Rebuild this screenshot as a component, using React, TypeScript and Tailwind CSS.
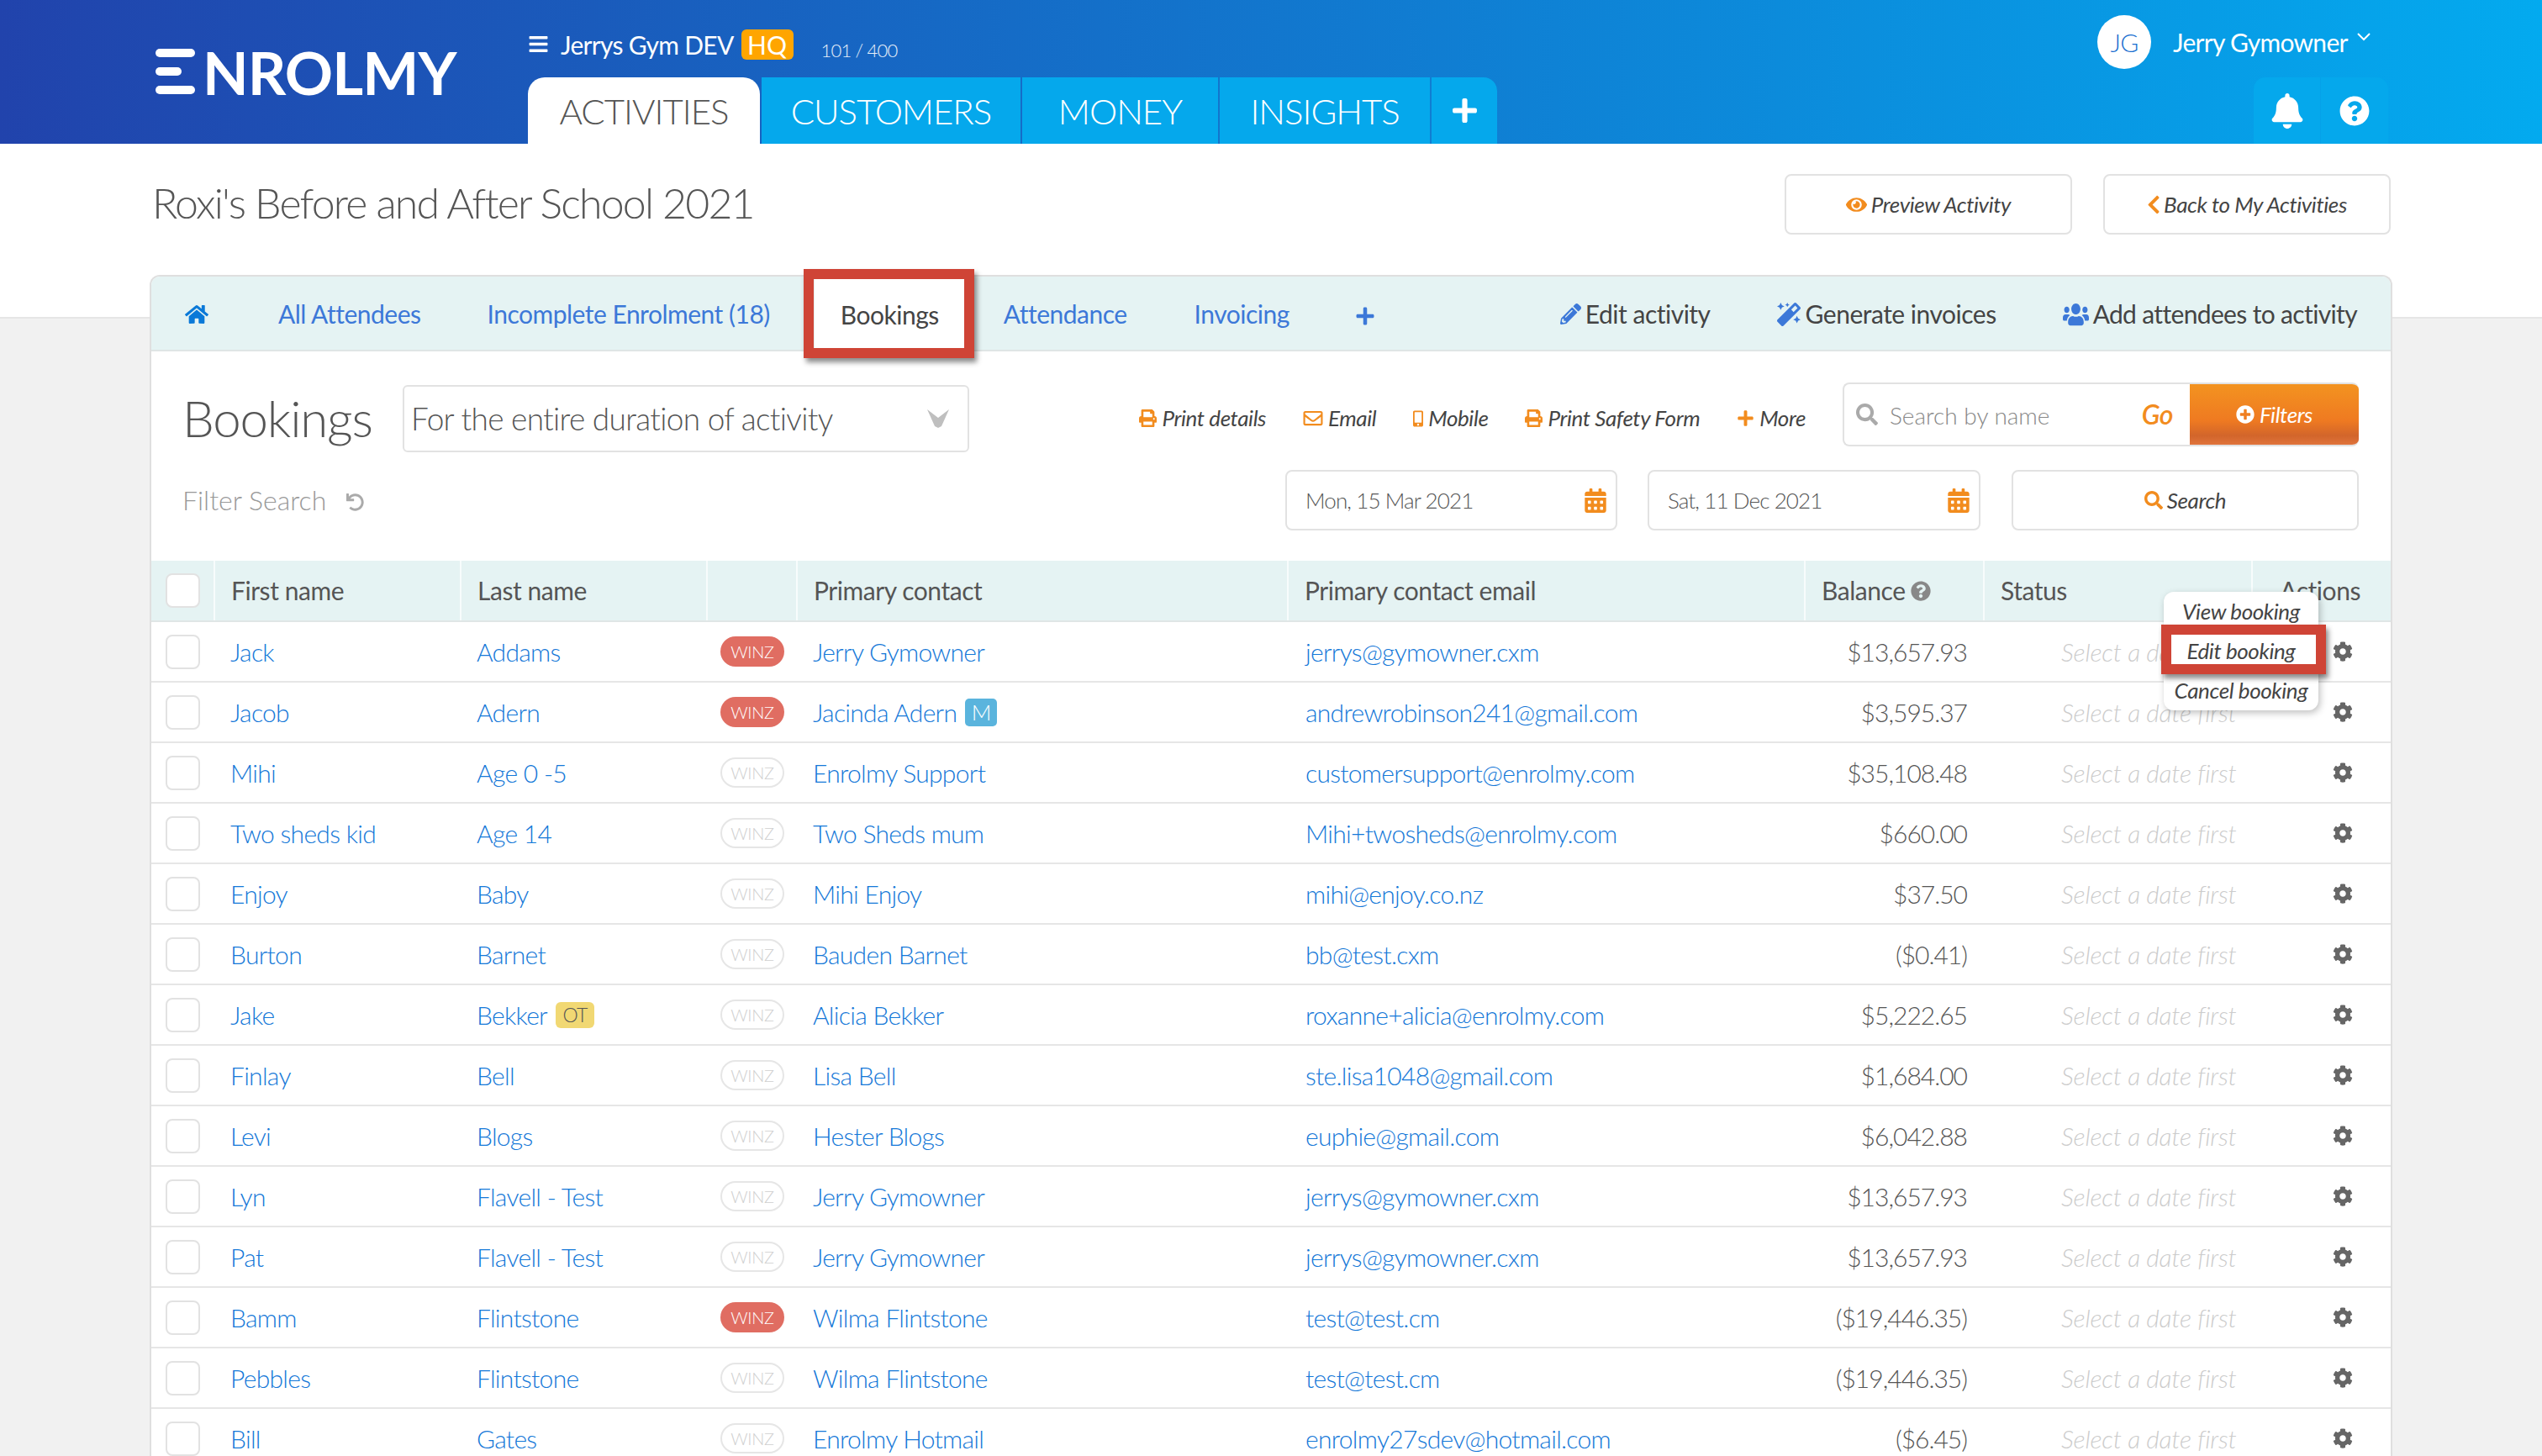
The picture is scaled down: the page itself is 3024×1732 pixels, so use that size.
import React from "react";
import {
  FaBars, FaBell, FaQuestionCircle, FaEye, FaChevronLeft, FaHome, FaPlus, FaPencilAlt, FaMagic, FaUsers,
  FaPrint, FaRegEnvelope, FaMobileAlt, FaSearch, FaPlusCircle, FaCalendarAlt, FaCog, FaUndo,
} from "react-icons/fa";

type Row = { f: string; l: string; red?: boolean; c: string; e: string; b: string; m?: boolean; ot?: boolean };

const rows: Row[] = [
  { f: "Jack", l: "Addams", red: true, c: "Jerry Gymowner", e: "jerrys@gymowner.cxm", b: "$13,657.93" },
  { f: "Jacob", l: "Adern", red: true, c: "Jacinda Adern", m: true, e: "andrewrobinson241@gmail.com", b: "$3,595.37" },
  { f: "Mihi", l: "Age 0 -5", c: "Enrolmy Support", e: "customersupport@enrolmy.com", b: "$35,108.48" },
  { f: "Two sheds kid", l: "Age 14", c: "Two Sheds mum", e: "Mihi+twosheds@enrolmy.com", b: "$660.00" },
  { f: "Enjoy", l: "Baby", c: "Mihi Enjoy", e: "mihi@enjoy.co.nz", b: "$37.50" },
  { f: "Burton", l: "Barnet", c: "Bauden Barnet", e: "bb@test.cxm", b: "($0.41)" },
  { f: "Jake", l: "Bekker", ot: true, c: "Alicia Bekker", e: "roxanne+alicia@enrolmy.com", b: "$5,222.65" },
  { f: "Finlay", l: "Bell", c: "Lisa Bell", e: "ste.lisa1048@gmail.com", b: "$1,684.00" },
  { f: "Levi", l: "Blogs", c: "Hester Blogs", e: "euphie@gmail.com", b: "$6,042.88" },
  { f: "Lyn", l: "Flavell - Test", c: "Jerry Gymowner", e: "jerrys@gymowner.cxm", b: "$13,657.93" },
  { f: "Pat", l: "Flavell - Test", c: "Jerry Gymowner", e: "jerrys@gymowner.cxm", b: "$13,657.93" },
  { f: "Bamm", l: "Flintstone", red: true, c: "Wilma Flintstone", e: "test@test.cm", b: "($19,446.35)" },
  { f: "Pebbles", l: "Flintstone", c: "Wilma Flintstone", e: "test@test.cm", b: "($19,446.35)" },
  { f: "Bill", l: "Gates", c: "Enrolmy Hotmail", e: "enrolmy27sdev@hotmail.com", b: "($6.45)" },
];

const GRID = "grid grid-cols-[74px_293px_293px_107px_584px_615px_213px_319px_166px]";

function Head({ children, className = "" }: { children?: React.ReactNode; className?: string }) {
  return <div className={"flex items-center border-l-2 border-white/70 pl-[19px] " + className}>{children}</div>;
}

function RedBox({ className }: { className: string }) {
  return <div className={"absolute border-[12px] border-[#cf4436] shadow-[3px_5px_6px_rgba(0,0,0,0.45)] pointer-events-none " + className} />;
}

function ActionLink({ icon, label }: { icon: React.ReactNode; label: string }) {
  return (
    <span className="flex items-center gap-[6px] text-[26px] italic font-normal tracking-[-0.4px] text-[#444]">
      <span className="text-[#f28c1e]">{icon}</span>
      {label}
    </span>
  );
}

export default function App() {
  return (
    <div className="w-full h-[1732px] overflow-hidden bg-[#f1f1f1] font-[Lato,sans-serif] text-[#555]">
      {/* Top bar */}
      <header className="h-[171px] flex bg-[linear-gradient(90deg,#2143ac_0%,#03aaef_100%)] text-white">
        <div className="w-[628px] shrink-0 pl-[185px] pt-[58px]">
          <div className="flex items-center h-[54px]">
            <svg width="47" height="54" viewBox="0 0 47 54" fill="#fff" className="shrink-0">
              <rect x="0" y="0" width="47" height="10" rx="5" />
              <rect x="0" y="22" width="31" height="10" rx="5" />
              <rect x="0" y="44" width="47" height="10" rx="5" />
            </svg>
            <span className="ml-[9px] text-[71px] leading-none font-bold tracking-[-0.9px]">NROLMY</span>
          </div>
        </div>
        <div className="flex flex-col">
          <div className="h-[92px] flex items-start pt-[35px]">
            <FaBars className="w-[25px] h-[25px] mt-[5px]" />
            <span className="ml-[14px] text-[30px] leading-[36px] font-normal tracking-[-0.7px]">Jerrys Gym DEV</span>
            <span className="ml-[9px] w-[62px] h-[36px] bg-[#ffa500] rounded-[6px] flex items-center justify-center text-[30px] leading-none">HQ</span>
            <span className="ml-[33px] mt-[12px] text-[22px] leading-[26px] font-light tracking-[-0.8px] text-white/90">101 / 400</span>
          </div>
          <nav className="flex h-[79px] text-[42px] font-light tracking-[-1px]">
            <div className="w-[276px] pt-[2px] bg-white text-[#555] rounded-t-[20px] flex items-center justify-center">ACTIVITIES</div>
            <div className="w-[308px] pt-[2px] ml-[2px] bg-[#05a8ec] flex items-center justify-center">CUSTOMERS</div>
            <div className="w-[233px] pt-[2px] ml-[2px] bg-[#05a8ec] flex items-center justify-center">MONEY</div>
            <div className="w-[250px] pt-[2px] ml-[2px] bg-[#05a8ec] flex items-center justify-center">INSIGHTS</div>
            <div className="w-[78px] ml-[2px] bg-[#05a8ec] rounded-tr-[16px] flex items-center justify-center"><FaPlus className="w-[33px] h-[33px]" /></div>
          </nav>
        </div>
        <div className="ml-auto w-[534px] shrink-0 flex flex-col pl-[5px]">
          <div className="h-[92px] flex items-start pt-[18px]">
            <div className="w-[64px] h-[64px] rounded-full bg-white text-[#1a6fd0] flex items-center justify-center text-[30px] font-light tracking-[-0.7px]">JG</div>
            <span className="ml-[26px] mt-[14px] text-[30px] leading-[36px] font-normal tracking-[-0.7px]">Jerry Gymowner</span>
            <svg width="18" height="12" viewBox="0 0 18 12" fill="none" stroke="#fff" strokeWidth="2" className="ml-[10px] mt-[20px]">
              <polyline points="2,2 9,9 16,2" />
            </svg>
          </div>
          <div className="flex h-[79px] ml-[186px]">
            <div className="w-[79px] bg-[#05a8ec] rounded-tl-[14px] flex items-center justify-center"><FaBell className="w-[40px] h-[42px]" /></div>
            <div className="w-[80px] ml-[1px] bg-[#05a8ec] rounded-tr-[14px] flex items-center justify-center"><FaQuestionCircle className="w-[36px] h-[36px]" /></div>
          </div>
        </div>
      </header>

      {/* Title band */}
      <div className="h-[208px] bg-white border-b-2 border-[#e6e6e6] flex items-start pl-[181px] pr-[180px] pt-[36px]">
        <h1 className="mt-[-2px] text-[50px] leading-[72px] font-light tracking-[-1.8px] text-[#555]">Roxi's Before and After School 2021</h1>
        <button className="ml-auto w-[342px] h-[72px] bg-white border-2 border-[#e2e2e2] rounded-[8px] flex items-center justify-center gap-[5px] text-[26px] italic font-normal tracking-[-0.4px] text-[#444]">
          <FaEye className="w-[25px] h-[25px] text-[#f28c1e]" /> Preview Activity
        </button>
        <button className="ml-[37px] w-[342px] h-[72px] bg-white border-2 border-[#e2e2e2] rounded-[8px] flex items-center justify-center gap-[4px] text-[26px] italic font-normal tracking-[-0.4px] text-[#444]">
          <FaChevronLeft className="w-[16px] h-[25px] text-[#f28c1e]" /> Back to My Activities
        </button>
      </div>

      {/* Panel */}
      <main className="relative mt-[-52px] ml-[178px] w-[2668px] bg-white border-x-2 border-t-2 border-[#dfdfdf] rounded-t-[12px]">
        {/* Sub navigation */}
        <div className="h-[89px] pt-[2px] bg-[#e5f3f3] rounded-t-[10px] border-b-2 border-[#dfe5e5] flex items-center text-[30px] tracking-[-0.5px] text-[#3c78d8] font-normal">
          <FaHome className="ml-[40px] w-[28px] h-[26px] text-[#0a79d8]" />
          <span className="ml-[83px]">All Attendees</span>
          <span className="ml-[79px]">Incomplete Enrolment (18)</span>
          <div className="relative ml-[53px] w-[179px] h-[84px] self-end bg-white text-[#444] flex items-center justify-center">
            Bookings
            <RedBox className="left-[-13px] right-[-11px] top-[-12px] bottom-[-10px]" />
          </div>
          <span className="ml-[46px]">Attendance</span>
          <span className="ml-[80px]">Invoicing</span>
          <FaPlus className="ml-[78px] mt-[4px] w-[24px] h-[24px]" />
          <span className="ml-auto flex items-center gap-[5px] text-[#444]"><FaPencilAlt className="w-[25px] h-[25px] text-[#3c78d8]" />Edit activity</span>
          <span className="ml-[79px] flex items-center gap-[6px] text-[#444]"><FaMagic className="w-[28px] h-[28px] text-[#3c78d8]" />Generate invoices</span>
          <span className="ml-[79px] mr-[40px] flex items-center gap-[5px] tracking-[-0.65px] text-[#444]"><FaUsers preserveAspectRatio="none" className="w-[31px] h-[30px] text-[#3c78d8]" />Add attendees to activity</span>
        </div>

        {/* Controls */}
        <div className="h-[249px] pl-[37px] pr-[38px] pt-[37px]">
          <div className="flex items-start h-[84px]">
            <span className="text-[60px] leading-[84px] font-light tracking-[-1.2px] w-[262px] shrink-0">Bookings</span>
            <div className="mt-[3px] w-[674px] h-[80px] border-2 border-[#e2e2e2] rounded-[6px] flex items-center pl-[8px] pr-[22px] text-[37px] font-light tracking-[-0.7px]">
              For the entire duration of activity
              <svg width="26" height="22" viewBox="0 0 26 22" fill="#bfbfbf" className="ml-auto">
                <polygon points="0,0 13,10 26,0 17,20 13,22 9,20" />
              </svg>
            </div>
            <div className="ml-auto mt-[23px] flex items-center gap-[44px] mr-[44px]">
              <ActionLink icon={<FaPrint className="w-[21px] h-[21px]" />} label="Print details" />
              <ActionLink icon={<FaRegEnvelope className="w-[24px] h-[23px]" />} label="Email" />
              <ActionLink icon={<FaMobileAlt className="w-[12px] h-[22px]" />} label="Mobile" />
              <ActionLink icon={<FaPrint className="w-[21px] h-[21px]" />} label="Print Safety Form" />
              <ActionLink icon={<FaPlus className="w-[21px] h-[21px]" />} label="More" />
            </div>
            <div className="w-[614px] h-[76px] border-2 border-r-0 border-[#e2e2e2] rounded-[8px] flex items-center pl-[14px] overflow-hidden">
              <FaSearch className="w-[26px] h-[26px] text-[#aaa]" />
              <span className="ml-[14px] mt-[2px] text-[28px] font-light text-[#888]">Search by name</span>
              <span className="ml-auto mr-[20px] text-[32px] font-semibold italic tracking-[-0.5px] text-[#f28c1e]">Go</span>
              <div className="w-[201px] h-full bg-[linear-gradient(180deg,#f39320_0%,#ef7a21_60%,#d2652b_85%,#e0743c_100%)] text-white flex items-center justify-center gap-[6px] text-[26px] italic font-normal tracking-[-0.4px]">
                <FaPlusCircle className="w-[22px] h-[22px]" /> Filters
              </div>
            </div>
          </div>
          <div className="mt-[20px] flex items-center h-[72px]">
            <span className="text-[32px] font-light text-[#999]">Filter Search</span>
            <FaUndo className="ml-[24px] mt-[4px] w-[21px] h-[21px] text-[#aaa]" />
            <div className="ml-auto w-[395px] h-[72px] border-2 border-[#e2e2e2] rounded-[8px] flex items-center pl-[22px] pr-[11px] text-[26px] font-light tracking-[-0.9px]">
              Mon, 15 Mar 2021
              <FaCalendarAlt className="ml-auto w-[26px] h-[29px] text-[#f28c1e]" />
            </div>
            <div className="ml-[36px] w-[396px] h-[72px] border-2 border-[#e2e2e2] rounded-[8px] flex items-center pl-[22px] pr-[11px] text-[26px] font-light tracking-[-0.9px]">
              Sat, 11 Dec 2021
              <FaCalendarAlt className="ml-auto w-[26px] h-[29px] text-[#f28c1e]" />
            </div>
            <div className="ml-[37px] w-[413px] h-[72px] border-2 border-[#e2e2e2] rounded-[8px] flex items-center justify-center gap-[5px] text-[26px] italic font-normal tracking-[-0.4px] text-[#444]">
              <FaSearch className="w-[22px] h-[22px] text-[#f28c1e]" /> Search
            </div>
          </div>
        </div>

        {/* Table */}
        <div className="relative">
          <div className={GRID + " h-[73px] bg-[#e5f3f3] border-b-2 border-[#e0e6e6] text-[30px] font-normal tracking-[-0.45px] text-[#555]"}>
            <div className="flex items-center pl-[17px]"><span className="w-[41px] h-[41px] bg-white border-2 border-[#e2e2e2] rounded-[8px]" /></div>
            <Head>First name</Head>
            <Head>Last name</Head>
            <Head />
            <Head>Primary contact</Head>
            <Head>Primary contact email</Head>
            <Head>Balance<FaQuestionCircle className="ml-[6px] w-[24px] h-[24px] text-[#888]" /></Head>
            <Head>Status</Head>
            <Head className="justify-end pr-[36px]">Actions</Head>
          </div>
          {rows.map((r, i) => (
            <div key={i} className={GRID + " h-[72px] border-b-2 border-[#e6e6e6] items-center text-[30px] font-light tracking-[-0.7px] text-[#1478d8]"}>
              <div className="pl-[17px] flex"><span className="w-[41px] h-[41px] bg-white border-2 border-[#e2e2e2] rounded-[8px]" /></div>
              <div className="pl-[20px]">{r.f}</div>
              <div className="pl-[20px] flex items-center gap-[10px]">
                {r.l}
                {r.ot && <span className="w-[46px] h-[31px] bg-[#f1d873] rounded-[6px] text-[#555] text-[23px] flex items-center justify-center">OT</span>}
              </div>
              <div className="pl-[17px]">
                <span className={"w-[76px] h-[36px] rounded-[18px] text-[20px] tracking-[-0.3px] flex items-center justify-center " + (r.red ? "bg-[#e06d62] text-white" : "border-2 border-[#e6e6e6] text-[#cfcfcf]")}>WINZ</span>
              </div>
              <div className="pl-[20px] flex items-center gap-[10px]">
                {r.c}
                {r.m && <span className="w-[38px] h-[33px] bg-[#5ab4dd] rounded-[5px] text-white text-[26px] flex items-center justify-center">M</span>}
              </div>
              <div className="pl-[22px]">{r.e}</div>
              <div className="text-right pr-[19px] tracking-[-1px] text-[#555]">{r.b}</div>
              <div className="pl-[93px] text-[30px] tracking-[-0.2px] italic text-[#ccc] whitespace-nowrap">Select a date first</div>
              <div className="pl-[97px] flex"><FaCog className="w-[24px] h-[24px] text-[#666]" /></div>
            </div>
          ))}
          {/* Row action menu */}
          <div className="absolute left-[2394px] top-[37px] w-[184px] h-[141px] bg-white rounded-[12px] shadow-[2px_3px_8px_rgba(0,0,0,0.25)] flex flex-col items-center justify-between py-[4px] text-[26px] italic font-normal tracking-[-0.4px] text-[#444]">
            <span>View booking</span>
            <span>Edit booking</span>
            <span>Cancel booking</span>
            <RedBox className="left-[-3px] top-[39px] w-[196px] h-[59px]" />
          </div>
        </div>
      </main>
    </div>
  );
}
